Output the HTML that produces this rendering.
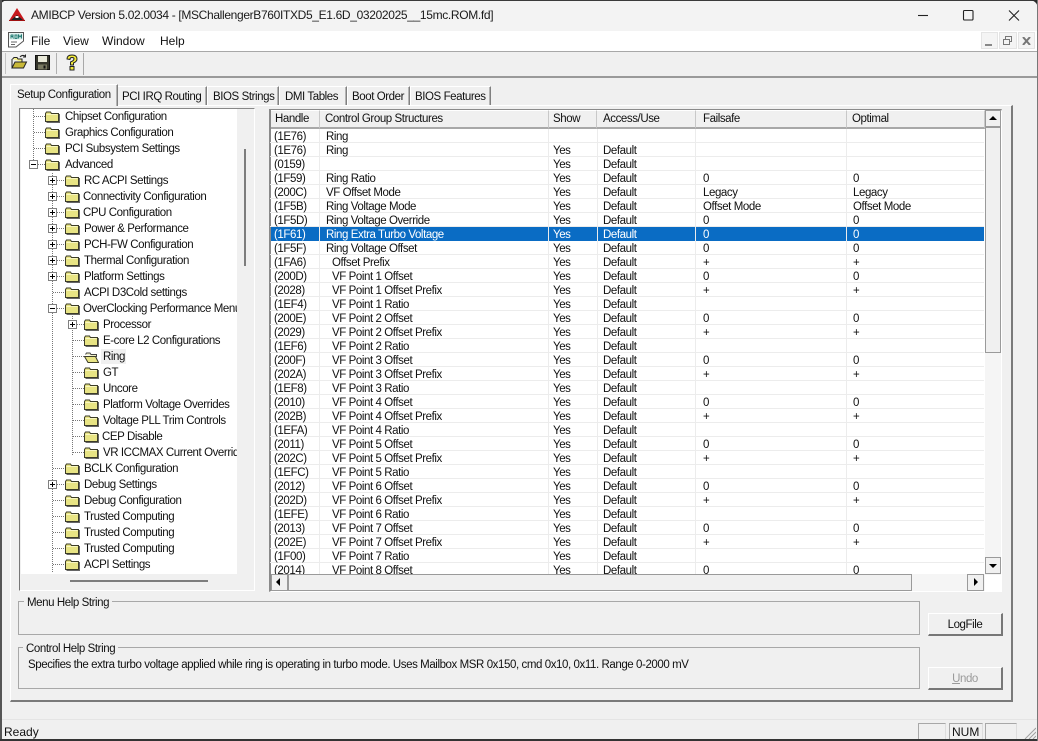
<!DOCTYPE html>
<html><head><meta charset="utf-8"><title>AMIBCP</title>
<style>
html,body{margin:0;padding:0;background:#f0f0f0}
#w{position:relative;width:1038px;height:741px;overflow:hidden;background:#f0f0f0;font:11.5px/14px "Liberation Sans",sans-serif;letter-spacing:-.42px;color:#111}
#w div,#w span,#w svg{position:absolute}
.t{white-space:nowrap}
.tab{background:#f0f0f0;border-top:1px solid #fff;border-left:1px solid #fff;border-right:1px solid #808080;box-shadow:inset -1px 0 #b4b4b4;box-sizing:border-box;top:86px;height:19px}
.tab span{top:3px;white-space:nowrap}
#tree .i{height:16px;width:230px;left:0}
#tree .i span{white-space:nowrap;top:0}
#tree .i svg{top:1px}
.rows .r{left:0;width:714px;height:14px;border-bottom:1px solid #ececec;box-sizing:border-box}
.r span{top:1px;white-space:nowrap}
.r span:nth-child(1){left:4px}
.r span:nth-child(2){left:56px}
.r span:nth-child(3){left:283px}
.r span:nth-child(4){left:333px}
.r span:nth-child(5){left:433px}
.r span:nth-child(6){left:583px}
.r.sel{background:#0a6cc4;color:#fff;border-bottom:0}
.r.n span:nth-child(2){left:62px}
.hd{top:110px;height:16px;background:#f0f0f0;border-bottom:2px solid #a8a8a8;border-right:1px solid #c8c8c8;border-top:1px solid #fff;box-sizing:content-box}
.hd span{left:4px;top:1px;white-space:nowrap}
.btn{background:#f0f0f0;border:1px solid #fff;border-right:2px solid #777;border-bottom:2px solid #777;box-sizing:border-box;text-align:center}
.sb{background:#f0f0f0;border:1px solid #9a9a9a;box-sizing:border-box}
.gb{border:1px solid #a8a8a8;box-sizing:border-box;left:18px;width:902px}
.leg{background:#f0f0f0;padding:0 3px;white-space:nowrap}
.dv{width:1px;background-image:linear-gradient(#777 50%,transparent 50%);background-size:1px 2px}
.dh{height:1px;background-image:linear-gradient(90deg,#777 50%,transparent 50%);background-size:2px 1px}
.box{width:9px;height:9px;border:1px solid #808080;background:#fff;box-sizing:border-box}
.box:before{content:"";position:absolute;left:1px;top:3px;width:5px;height:1px;background:#000}
.box.p:after{content:"";position:absolute;left:3px;top:1px;width:1px;height:5px;background:#000}
.pn{border:1px solid #a8a8a8;border-bottom:0;border-right:1px solid #ddd;box-sizing:border-box;top:723px;height:18px}
</style></head><body>
<div id="w">
<svg width="0" height="0" style="left:0;top:0"><defs>
<symbol id="f" viewBox="0 0 15 12"><path d="M.5 2.5 L1.5 1 H5.5 L6.5 2.5 H13.5 V10.5 H.5 Z" fill="#e8e484" stroke="#3c3c28"/><path d="M1.5 3.5 H12.5" stroke="#f8f6c0"/><path d="M14.5 3 V11.5 H1.5" fill="none" stroke="#666"/></symbol>
<symbol id="o" viewBox="0 0 15 12"><path d="M1.5 3.5 L2.5 2 H6 L7 3.5 H12.5 V6" fill="#f0efc8" stroke="#444"/><path d="M0.5 5.5 H11.5 L14.5 11.5 H4 Z" fill="#e8e484" stroke="#3c3c28"/></symbol>
</defs></svg>

<!-- title bar -->
<div style="left:0;top:0;width:1038px;height:31px;background:#f3f3f3"></div>
<div style="left:0;top:0;width:1038px;height:1px;background:#3a3a3a"></div>
<svg style="left:9px;top:7px" width="16" height="15" viewBox="0 0 16 15"><path d="M8 1 L15.5 13 H0.5 Z" fill="#c8181c"/><path d="M2 13 L8 8 L14 13 Z" fill="#222"/><path d="M0 13 H16 V14 H0Z" fill="#a01010"/><path d="M6.5 9 H9.5 V11 H6.5Z" fill="#fff"/></svg>
<div class="t" style="left:31px;top:8px;font-size:12px;letter-spacing:-.34px;line-height:15px;color:#1a1a1a">AMIBCP Version 5.02.0034 - [MSChallengerB760ITXD5_E1.6D_03202025__15mc.ROM.fd]</div>
<svg style="left:918px;top:9px" width="102" height="14" viewBox="0 0 102 14" fill="none" stroke="#222" stroke-width="1.1"><path d="M0 6.5 H10"/><rect x="45.5" y="1.5" width="9.5" height="9.5" rx="1"/><path d="M91 1.5 L101 11.5 M101 1.5 L91 11.5"/></svg>
<svg style="left:0;top:0" width="1038" height="12" viewBox="0 0 1038 12"><path d="M0 0 H7 Q1 1 0 7Z M1038 0 H1030 Q1037 1 1038 8Z" fill="#2a2a2a"/></svg>

<!-- menu bar -->
<div style="left:0;top:31px;width:1038px;height:20px;background:#fff"></div>
<svg style="left:8px;top:32px" width="17" height="17" viewBox="0 0 17 17"><path d="M.5 .5 H15.5 V9 L8 15 H.5Z" fill="#fff" stroke="#555"/><rect x="1.5" y="1.5" width="13" height="6" fill="#cfe8e4"/><path d="M3 3 V6.5 M3 3 H5 V4.5 H3 M4.5 4.5 L5.5 6.5 M7 3 H9 V6.5 H7Z M10.5 6.5 V3 L12 5 L13.5 3 V6.5" fill="none" stroke="#0a6a62" stroke-width=".8"/><path d="M3 10 H9 M3 12.5 H7" stroke="#666"/></svg>
<div class="t" style="left:31px;top:34px;font-size:12px;letter-spacing:0;line-height:14px">File</div>
<div class="t" style="left:63px;top:34px;font-size:12px;letter-spacing:0;line-height:14px">View</div>
<div class="t" style="left:102px;top:34px;font-size:12px;letter-spacing:0;line-height:14px">Window</div>
<div class="t" style="left:160px;top:34px;font-size:12px;letter-spacing:0;line-height:14px">Help</div>
<div class="btn" style="left:981px;top:32px;width:17px;height:17px;border:1px solid #e4e4e4;background:#f4f4f4"></div>
<div style="left:985px;top:44px;width:7px;height:2px;background:#888"></div>
<div class="btn" style="left:999px;top:32px;width:18px;height:17px;border:1px solid #e4e4e4;background:#f4f4f4"></div>
<svg style="left:1003px;top:36px" width="10" height="9" viewBox="0 0 10 9" fill="none" stroke="#777"><rect x="2.5" y=".5" width="6" height="5"/><rect x=".5" y="3.5" width="6" height="5" fill="#f4f4f4"/></svg>
<div class="btn" style="left:1018px;top:32px;width:17px;height:17px;border:1px solid #e4e4e4;background:#f4f4f4"></div>
<svg style="left:1022px;top:37px" width="9" height="8" viewBox="0 0 9 8" fill="none" stroke="#777" stroke-width="2"><path d="M1 0 L8 8 M8 0 L1 8"/></svg>
<div style="left:0;top:51px;width:1038px;height:1px;background:#a8a8a8"></div>

<!-- toolbar -->
<div style="left:5px;top:53px;width:1px;height:21px;background:#c4c4c4"></div>
<svg style="left:11px;top:54px" width="17" height="16" viewBox="0 0 17 16"><path d="M1.5 5 L3 3.5 H6 L7 5 H11 V8" fill="#f6f28a" stroke="#222"/><path d="M1 14 V5 M1 14 L4 8 H15.5 L12.5 14 Z" fill="#c8b838" stroke="#222"/><path d="M9 3 Q11 0.5 14 2 M14.5 .5 V3 H12" fill="none" stroke="#222"/></svg>
<svg style="left:35px;top:55px" width="15" height="15" viewBox="0 0 15 15"><path d="M.5 .5 H14.5 V14.5 H.5Z" fill="#34342a" stroke="#111"/><rect x="3" y="1" width="9" height="6" fill="#e8e8d8"/><rect x="3" y="9.5" width="9" height="5" fill="#777760"/><rect x="8.5" y="10.5" width="2" height="3" fill="#111"/></svg>
<div style="left:56px;top:53px;width:1px;height:21px;background:#b0b0b0"></div>
<svg style="left:65px;top:54px" width="14" height="17" viewBox="0 0 14 17"><path d="M2 5 Q2 1 7 1 Q12 1 12 5 Q12 7.5 8.5 9 V11 H5.5 V8 Q9 6.8 9 4.8 Q9 3.5 7 3.5 Q5 3.5 5 5.5 Z" fill="#f2ea3a" stroke="#222"/><rect x="5" y="12.5" width="4" height="3.5" fill="#f2ea3a" stroke="#222"/></svg>
<div style="left:83px;top:53px;width:1px;height:22px;background:#a8a8a8"></div>
<div style="left:2px;top:76px;width:1036px;height:2px;background:#9a9a9a"></div>

<!-- tab panel -->
<div style="left:10px;top:105px;width:1003px;height:597px;box-sizing:border-box;border:1px solid #fff;border-right:2px solid #7a7a7a;border-bottom:2px solid #7a7a7a"></div>
<div class="tab" style="left:117px;width:90px"><span style="left:4px">PCI IRQ Routing</span></div>
<div class="tab" style="left:207px;width:72px"><span style="left:5px">BIOS Strings</span></div>
<div class="tab" style="left:279px;width:68px"><span style="left:5px">DMI Tables</span></div>
<div class="tab" style="left:347px;width:63px"><span style="left:4px">Boot Order</span></div>
<div class="tab" style="left:410px;width:81px"><span style="left:4px">BIOS Features</span></div>
<div class="tab" style="left:10px;top:84px;width:108px;height:22px"><span style="left:6px;top:3px">Setup Configuration</span></div>

<!-- tree -->
<div style="left:19px;top:108px;width:236px;height:483px;background:#f0f0f0;border-top:1px solid #888;border-left:1px solid #777;border-right:1px solid #fff;border-bottom:1px solid #fff;box-sizing:border-box"></div>
<div id="tree" style="left:21px;top:109px;width:216px;height:465px;background:#fff;overflow:hidden">
<div class="dv" style="left:12px;top:0;height:51px"></div>
<div class="dv" style="left:31px;top:64px;height:400px"></div>
<div class="dv" style="left:51px;top:207px;height:140px"></div>

<div class="dh" style="left:13px;top:7px;width:11px"></div>
<div class="dh" style="left:13px;top:23px;width:11px"></div>
<div class="dh" style="left:13px;top:39px;width:11px"></div>
<div class="dh" style="left:17px;top:55px;width:7px"></div>

<div class="i" style="top:1px"><svg style="left:24px" width="15" height="12"><use href="#f"/></svg><span style="left:44px">Chipset Configuration</span></div>
<div class="i" style="top:17px"><svg style="left:24px" width="15" height="12"><use href="#f"/></svg><span style="left:44px">Graphics Configuration</span></div>
<div class="i" style="top:33px"><svg style="left:24px" width="15" height="12"><use href="#f"/></svg><span style="left:44px">PCI Subsystem Settings</span></div>
<div class="box" style="left:8px;top:51px"></div>
<div class="i" style="top:49px"><svg style="left:24px" width="15" height="12"><use href="#f"/></svg><span style="left:44px">Advanced</span></div>

<div class="dh" style="left:36px;top:71px;width:8px"></div><div class="box p" style="left:27px;top:67px"></div>
<div class="i" style="top:65px"><svg style="left:44px" width="15" height="12"><use href="#f"/></svg><span style="left:63px">RC ACPI Settings</span></div>
<div class="dh" style="left:36px;top:87px;width:8px"></div><div class="box p" style="left:27px;top:83px"></div>
<div class="i" style="top:81px"><svg style="left:44px" width="15" height="12"><use href="#f"/></svg><span style="left:62px">Connectivity Configuration</span></div>
<div class="dh" style="left:36px;top:103px;width:8px"></div><div class="box p" style="left:27px;top:99px"></div>
<div class="i" style="top:97px"><svg style="left:44px" width="15" height="12"><use href="#f"/></svg><span style="left:62px">CPU Configuration</span></div>
<div class="dh" style="left:36px;top:119px;width:8px"></div><div class="box p" style="left:27px;top:115px"></div>
<div class="i" style="top:113px"><svg style="left:44px" width="15" height="12"><use href="#f"/></svg><span style="left:63px">Power &amp; Performance</span></div>
<div class="dh" style="left:36px;top:135px;width:8px"></div><div class="box p" style="left:27px;top:131px"></div>
<div class="i" style="top:129px"><svg style="left:44px" width="15" height="12"><use href="#f"/></svg><span style="left:63px">PCH-FW Configuration</span></div>
<div class="dh" style="left:36px;top:151px;width:8px"></div><div class="box p" style="left:27px;top:147px"></div>
<div class="i" style="top:145px"><svg style="left:44px" width="15" height="12"><use href="#f"/></svg><span style="left:63px">Thermal Configuration</span></div>
<div class="dh" style="left:36px;top:167px;width:8px"></div><div class="box p" style="left:27px;top:163px"></div>
<div class="i" style="top:161px"><svg style="left:44px" width="15" height="12"><use href="#f"/></svg><span style="left:63px">Platform Settings</span></div>
<div class="dh" style="left:32px;top:183px;width:12px"></div>
<div class="i" style="top:177px"><svg style="left:44px" width="15" height="12"><use href="#f"/></svg><span style="left:63px">ACPI D3Cold settings</span></div>
<div class="dh" style="left:36px;top:199px;width:8px"></div><div class="box" style="left:27px;top:195px"></div>
<div class="i" style="top:193px"><svg style="left:44px" width="15" height="12"><use href="#f"/></svg><span style="left:62px">OverClocking Performance Menu</span></div>

<div class="dh" style="left:56px;top:215px;width:7px"></div><div class="box p" style="left:47px;top:211px"></div>
<div class="i" style="top:209px"><svg style="left:63px" width="15" height="12"><use href="#f"/></svg><span style="left:82px">Processor</span></div>
<div class="dh" style="left:52px;top:231px;width:11px"></div>
<div class="i" style="top:225px"><svg style="left:63px" width="15" height="12"><use href="#f"/></svg><span style="left:82px">E-core L2 Configurations</span></div>
<div class="dh" style="left:52px;top:247px;width:11px"></div>
<div style="left:80px;top:240px;width:25px;height:15px;background:#f0f0f0"></div>
<div class="i" style="top:241px"><svg style="left:63px" width="15" height="12"><use href="#o"/></svg><span style="left:82px">Ring</span></div>
<div class="dh" style="left:52px;top:263px;width:11px"></div>
<div class="i" style="top:257px"><svg style="left:63px" width="15" height="12"><use href="#f"/></svg><span style="left:82px">GT</span></div>
<div class="dh" style="left:52px;top:279px;width:11px"></div>
<div class="i" style="top:273px"><svg style="left:63px" width="15" height="12"><use href="#f"/></svg><span style="left:82px">Uncore</span></div>
<div class="dh" style="left:52px;top:295px;width:11px"></div>
<div class="i" style="top:289px"><svg style="left:63px" width="15" height="12"><use href="#f"/></svg><span style="left:82px">Platform Voltage Overrides</span></div>
<div class="dh" style="left:52px;top:311px;width:11px"></div>
<div class="i" style="top:305px"><svg style="left:63px" width="15" height="12"><use href="#f"/></svg><span style="left:82px">Voltage PLL Trim Controls</span></div>
<div class="dh" style="left:52px;top:327px;width:11px"></div>
<div class="i" style="top:321px"><svg style="left:63px" width="15" height="12"><use href="#f"/></svg><span style="left:81px">CEP Disable</span></div>
<div class="dh" style="left:52px;top:343px;width:11px"></div>
<div class="i" style="top:337px"><svg style="left:63px" width="15" height="12"><use href="#f"/></svg><span style="left:82px">VR ICCMAX Current Override</span></div>

<div class="dh" style="left:32px;top:359px;width:12px"></div>
<div class="i" style="top:353px"><svg style="left:44px" width="15" height="12"><use href="#f"/></svg><span style="left:63px">BCLK Configuration</span></div>
<div class="dh" style="left:36px;top:375px;width:8px"></div><div class="box p" style="left:27px;top:371px"></div>
<div class="i" style="top:369px"><svg style="left:44px" width="15" height="12"><use href="#f"/></svg><span style="left:63px">Debug Settings</span></div>
<div class="dh" style="left:32px;top:391px;width:12px"></div>
<div class="i" style="top:385px"><svg style="left:44px" width="15" height="12"><use href="#f"/></svg><span style="left:63px">Debug Configuration</span></div>
<div class="dh" style="left:32px;top:407px;width:12px"></div>
<div class="i" style="top:401px"><svg style="left:44px" width="15" height="12"><use href="#f"/></svg><span style="left:63px">Trusted Computing</span></div>
<div class="dh" style="left:32px;top:423px;width:12px"></div>
<div class="i" style="top:417px"><svg style="left:44px" width="15" height="12"><use href="#f"/></svg><span style="left:63px">Trusted Computing</span></div>
<div class="dh" style="left:32px;top:439px;width:12px"></div>
<div class="i" style="top:433px"><svg style="left:44px" width="15" height="12"><use href="#f"/></svg><span style="left:63px">Trusted Computing</span></div>
<div class="dh" style="left:32px;top:455px;width:12px"></div>
<div class="i" style="top:449px"><svg style="left:44px" width="15" height="12"><use href="#f"/></svg><span style="left:63px">ACPI Settings</span></div>
</div>
<div style="left:244px;top:149px;width:2px;height:117px;background:#7d7d7d"></div>
<div style="left:70px;top:580px;width:138px;height:2px;background:#7d7d7d"></div>

<!-- grid -->
<div style="left:269px;top:109px;width:733px;height:483px;box-sizing:border-box;border-top:2px solid #8a8a8a;border-left:2px solid #8a8a8a;border-right:1px solid #fff;border-bottom:1px solid #fff;background:#fff"></div>
<div class="hd" style="left:271px;width:48px"><span>Handle</span></div>
<div class="hd" style="left:320px;width:228px"><span style="left:5px">Control Group Structures</span></div>
<div class="hd" style="left:549px;width:47px"><span>Show</span></div>
<div class="hd" style="left:597px;width:98px"><span style="left:6px">Access/Use</span></div>
<div class="hd" style="left:696px;width:150px"><span style="left:7px">Failsafe</span></div>
<div class="hd" style="left:847px;width:137px"><span style="left:5px">Optimal</span></div>
<div class="rows" style="left:270px;top:129px;width:714px;height:445px;overflow:hidden">
<div style="left:49px;top:0;width:1px;height:445px;background:#ececec;z-index:2"></div>
<div style="left:278px;top:0;width:1px;height:445px;background:#ececec;z-index:2"></div>
<div style="left:327px;top:0;width:1px;height:445px;background:#ececec;z-index:2"></div>
<div style="left:425px;top:0;width:1px;height:445px;background:#ececec;z-index:2"></div>
<div style="left:576px;top:0;width:1px;height:445px;background:#ececec;z-index:2"></div>
<div class="r" style="top:0"><span>(1E76)</span><span>Ring</span></div>
<div class="r" style="top:14px"><span>(1E76)</span><span>Ring</span><span>Yes</span><span>Default</span></div>
<div class="r" style="top:28px"><span>(0159)</span><span></span><span>Yes</span><span>Default</span></div>
<div class="r" style="top:42px"><span>(1F59)</span><span>Ring Ratio</span><span>Yes</span><span>Default</span><span>0</span><span>0</span></div>
<div class="r" style="top:56px"><span>(200C)</span><span>VF Offset Mode</span><span>Yes</span><span>Default</span><span>Legacy</span><span>Legacy</span></div>
<div class="r" style="top:70px"><span>(1F5B)</span><span>Ring Voltage Mode</span><span>Yes</span><span>Default</span><span>Offset Mode</span><span>Offset Mode</span></div>
<div class="r" style="top:84px"><span>(1F5D)</span><span>Ring Voltage Override</span><span>Yes</span><span>Default</span><span>0</span><span>0</span></div>
<div class="r sel" style="top:98px;left:1px;width:713px"><span style="left:3px">(1F61)</span><span style="left:55px">Ring Extra Turbo Voltage</span><span style="left:282px">Yes</span><span style="left:332px">Default</span><span style="left:432px">0</span><span style="left:582px">0</span></div>
<div class="r" style="top:112px"><span>(1F5F)</span><span>Ring Voltage Offset</span><span>Yes</span><span>Default</span><span>0</span><span>0</span></div>
<div class="r n" style="top:126px"><span>(1FA6)</span><span>Offset Prefix</span><span>Yes</span><span>Default</span><span>+</span><span>+</span></div>
<div class="r n" style="top:140px"><span>(200D)</span><span>VF Point 1 Offset</span><span>Yes</span><span>Default</span><span>0</span><span>0</span></div>
<div class="r n" style="top:154px"><span>(2028)</span><span>VF Point 1 Offset Prefix</span><span>Yes</span><span>Default</span><span>+</span><span>+</span></div>
<div class="r n" style="top:168px"><span>(1EF4)</span><span>VF Point 1 Ratio</span><span>Yes</span><span>Default</span></div>
<div class="r n" style="top:182px"><span>(200E)</span><span>VF Point 2 Offset</span><span>Yes</span><span>Default</span><span>0</span><span>0</span></div>
<div class="r n" style="top:196px"><span>(2029)</span><span>VF Point 2 Offset Prefix</span><span>Yes</span><span>Default</span><span>+</span><span>+</span></div>
<div class="r n" style="top:210px"><span>(1EF6)</span><span>VF Point 2 Ratio</span><span>Yes</span><span>Default</span></div>
<div class="r n" style="top:224px"><span>(200F)</span><span>VF Point 3 Offset</span><span>Yes</span><span>Default</span><span>0</span><span>0</span></div>
<div class="r n" style="top:238px"><span>(202A)</span><span>VF Point 3 Offset Prefix</span><span>Yes</span><span>Default</span><span>+</span><span>+</span></div>
<div class="r n" style="top:252px"><span>(1EF8)</span><span>VF Point 3 Ratio</span><span>Yes</span><span>Default</span></div>
<div class="r n" style="top:266px"><span>(2010)</span><span>VF Point 4 Offset</span><span>Yes</span><span>Default</span><span>0</span><span>0</span></div>
<div class="r n" style="top:280px"><span>(202B)</span><span>VF Point 4 Offset Prefix</span><span>Yes</span><span>Default</span><span>+</span><span>+</span></div>
<div class="r n" style="top:294px"><span>(1EFA)</span><span>VF Point 4 Ratio</span><span>Yes</span><span>Default</span></div>
<div class="r n" style="top:308px"><span>(2011)</span><span>VF Point 5 Offset</span><span>Yes</span><span>Default</span><span>0</span><span>0</span></div>
<div class="r n" style="top:322px"><span>(202C)</span><span>VF Point 5 Offset Prefix</span><span>Yes</span><span>Default</span><span>+</span><span>+</span></div>
<div class="r n" style="top:336px"><span>(1EFC)</span><span>VF Point 5 Ratio</span><span>Yes</span><span>Default</span></div>
<div class="r n" style="top:350px"><span>(2012)</span><span>VF Point 6 Offset</span><span>Yes</span><span>Default</span><span>0</span><span>0</span></div>
<div class="r n" style="top:364px"><span>(202D)</span><span>VF Point 6 Offset Prefix</span><span>Yes</span><span>Default</span><span>+</span><span>+</span></div>
<div class="r n" style="top:378px"><span>(1EFE)</span><span>VF Point 6 Ratio</span><span>Yes</span><span>Default</span></div>
<div class="r n" style="top:392px"><span>(2013)</span><span>VF Point 7 Offset</span><span>Yes</span><span>Default</span><span>0</span><span>0</span></div>
<div class="r n" style="top:406px"><span>(202E)</span><span>VF Point 7 Offset Prefix</span><span>Yes</span><span>Default</span><span>+</span><span>+</span></div>
<div class="r n" style="top:420px"><span>(1F00)</span><span>VF Point 7 Ratio</span><span>Yes</span><span>Default</span></div>
<div class="r n" style="top:434px"><span>(2014)</span><span>VF Point 8 Offset</span><span>Yes</span><span>Default</span><span>0</span><span>0</span></div>
</div>

<!-- scrollbars -->
<div style="left:985px;top:127px;width:16px;height:448px;background:#f5f5f5"></div>
<div class="sb" style="left:985px;top:110px;width:16px;height:17px"></div>
<svg style="left:989px;top:116px" width="8" height="4"><path d="M4 0 L8 4 H0Z" fill="#000"/></svg>
<div class="sb" style="left:985px;top:127px;width:16px;height:226px"></div>
<div class="sb" style="left:985px;top:557px;width:16px;height:17px"></div>
<div style="left:989px;top:564px;width:0;height:0;border:4px solid transparent;border-top-color:#000;border-bottom:0"></div>
<div style="left:271px;top:574px;width:714px;height:17px;background:#f5f5f5"></div>
<div class="sb" style="left:271px;top:574px;width:17px;height:17px"></div>
<svg style="left:276px;top:578px" width="4" height="8"><path d="M0 4 L4 0 V8Z" fill="#000"/></svg>
<div class="sb" style="left:288px;top:574px;width:624px;height:17px"></div>
<div class="sb" style="left:967px;top:574px;width:17px;height:17px"></div>
<svg style="left:974px;top:578px" width="4" height="8"><path d="M4 4 L0 0 V8Z" fill="#000"/></svg>

<!-- group boxes -->
<div class="gb" style="top:601px;height:34px"></div>
<div class="leg" style="left:24px;top:596px">Menu Help String</div>
<div class="gb" style="top:647px;height:42px"></div>
<div class="leg" style="left:23px;top:642px">Control Help String</div>
<div class="t" style="left:28px;top:658px">Specifies the extra turbo voltage applied while ring is operating in turbo mode. Uses Mailbox MSR 0x150, cmd 0x10, 0x11. Range 0-2000 mV</div>

<!-- buttons -->
<div class="btn" style="left:928px;top:613px;width:75px;height:23px;line-height:22px">LogFile</div>
<div class="btn" style="left:928px;top:667px;width:75px;height:23px;line-height:22px;color:#9a9a9a"><u>U</u>ndo</div>

<!-- status -->
<div style="left:0;top:719px;width:1038px;height:1px;background:#e4e4e4"></div>
<div class="t" style="left:4px;top:725px;font-size:12px;letter-spacing:0">Ready</div>
<div class="pn" style="left:918px;width:28px"></div>
<div class="pn" style="left:949px;width:34px"></div>
<div class="t" style="left:952px;top:725px;font-size:12px;letter-spacing:0">NUM</div>
<div class="pn" style="left:985px;width:32px"></div>
<svg style="left:1024px;top:727px" width="12" height="12" viewBox="0 0 12 12" stroke="#a0a0a0" fill="none"><path d="M12 1 L1 12 M12 5 L5 12 M12 9 L9 12"/></svg>

<!-- window border -->
<div style="left:0;top:0;width:2px;height:741px;background:#555"></div>
<div style="left:0;top:739px;width:1038px;height:2px;background:#333"></div>
<div style="left:1037px;top:0;width:1px;height:741px;background:#777"></div>
</div>
</body></html>
